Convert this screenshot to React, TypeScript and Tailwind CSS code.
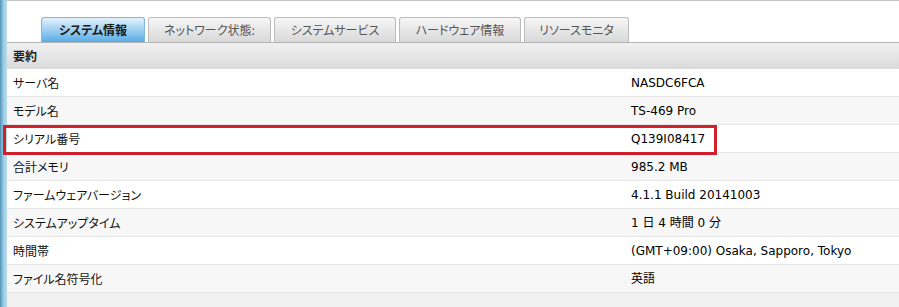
import React from 'react';

interface InfoRow {
  label: string;
  value: string;
}

const tabs = [
  { label: 'システム情報', width: 'w-[104px]', active: true },
  { label: 'ネットワーク状態:', width: 'w-[123px]', active: false },
  { label: 'システムサービス', width: 'w-[122px]', active: false },
  { label: 'ハードウェア情報', width: 'w-[122px]', active: false },
  { label: 'リソースモニタ', width: 'w-[105px]', active: false },
];

const rows: InfoRow[] = [
  { label: 'サーバ名', value: 'NASDC6FCA' },
  { label: 'モデル名', value: 'TS-469 Pro' },
  { label: 'シリアル番号', value: 'Q139I08417' },
  { label: '合計メモリ', value: '985.2 MB' },
  { label: 'ファームウェアバージョン', value: '4.1.1 Build 20141003' },
  { label: 'システムアップタイム', value: '1 日 4 時間 0 分' },
  { label: '時間帯', value: '(GMT+09:00) Osaka, Sapporo, Tokyo' },
  { label: 'ファイル名符号化', value: '英語' },
];

const jp = "font-['Noto_Sans_CJK_JP',sans-serif] [font-feature-settings:'palt']";
const val = "font-['DejaVu_Sans','Noto_Sans_CJK_JP',sans-serif]";

const App: React.FC = () => {
  return (
    <div className="w-[899px] h-[307px] flex overflow-hidden bg-white relative">
      {/* window edge */}
      <div className="w-[7px] h-full bg-gradient-to-r from-[#4f93b8] via-[#9ccbe2] to-[#b9dcec]" />

      <div className="flex-1 flex flex-col">
        {/* tab strip */}
        <div className="h-[43px] border-t border-[#c4c4c4] border-b border-b-[#b3b3b3] flex items-end gap-[3px] pl-[34px]">
          {tabs.map((t) => (
            <div
              key={t.label}
              className={`${t.width} h-[25px] rounded-t-[3px] border border-b-0 flex items-center justify-center text-[12px] ${jp} ${
                t.active
                  ? 'bg-gradient-to-b from-[#e3f2fc] to-[#55ace6] border-[#7fb8de] text-[#1a1a1a] font-bold'
                  : 'bg-gradient-to-b from-[#f6f6f6] to-[#d9d9d9] border-[#bcbcbc] text-[#555]'
              }`}
            >
              {t.label}
            </div>
          ))}
        </div>

        {/* summary header */}
        <div className={`h-[26px] flex items-center px-[6px] bg-gradient-to-b from-[#f1f1f1] to-[#dadada] text-[12px] font-bold text-[#222] ${jp}`}>
          要約
        </div>

        {rows.map((r, i) => (
          <div
            key={r.label}
            className={`h-[28px] flex items-center border-b border-[#e4e4e4] text-[12px] text-[#111] ${
              i % 2 === 0 ? 'bg-white' : 'bg-[#f7f7f7]'
            }`}
          >
            <div className={`w-[624px] pl-[6px] ${jp}`}>{r.label}</div>
            <div className={`text-[12px] text-black ${val}`}>{r.value}</div>
          </div>
        ))}

        <div className="flex-1 bg-[#f0f0f0]" />
      </div>

      {/* highlight annotation */}
      <div className="absolute left-[3px] top-[125px] w-[714px] h-[30px] border-[3px] border-[#d21f2c] pointer-events-none" />
    </div>
  );
};

export default App;
